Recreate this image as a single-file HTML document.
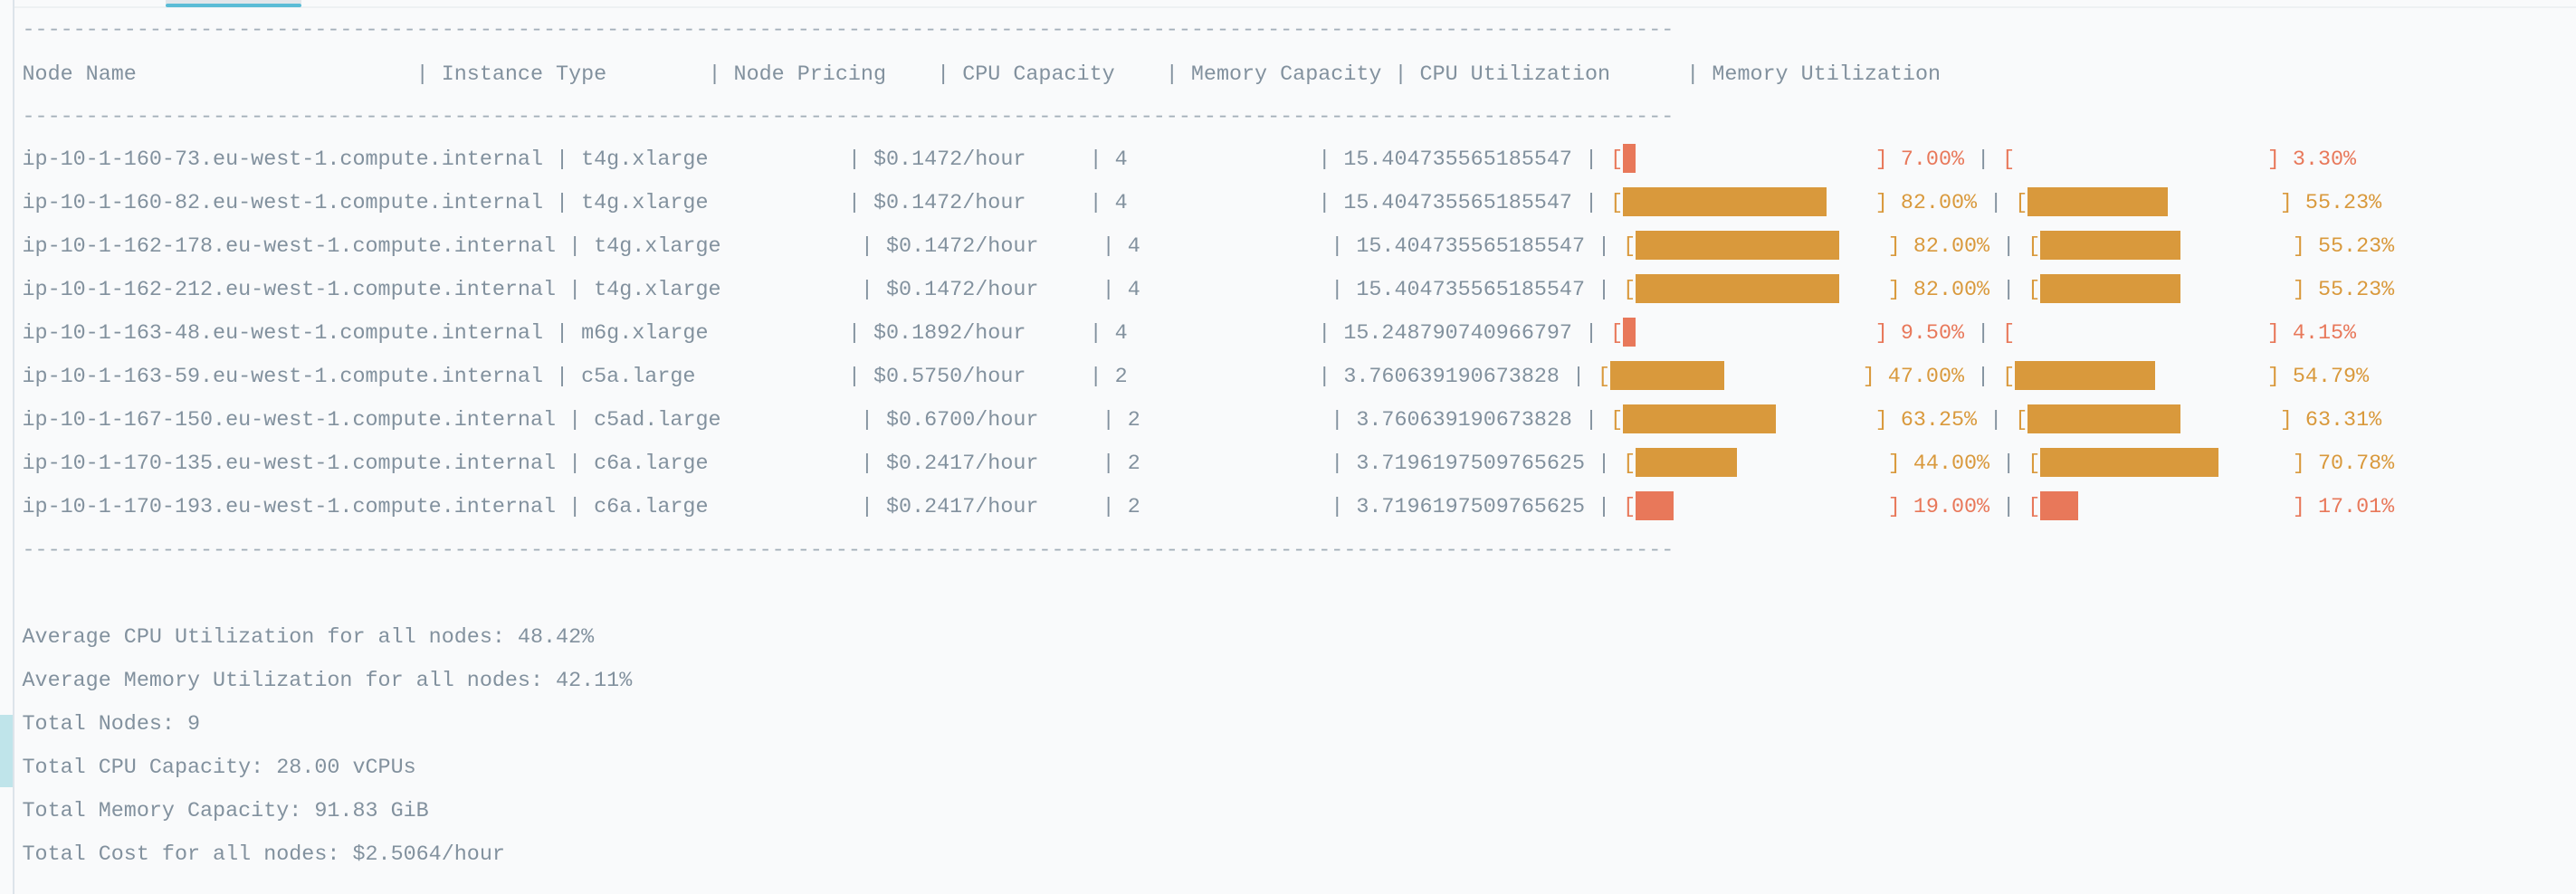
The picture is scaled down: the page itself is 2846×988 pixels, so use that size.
<!DOCTYPE html>
<html><head><meta charset="utf-8"><style>
html,body{margin:0;padding:0;background:#f9fafb;width:2846px;height:988px;overflow:hidden;position:relative}
.l{position:absolute;left:24.5px;font-family:"Liberation Mono",monospace;font-size:23.4px;line-height:48px;height:48px;white-space:pre;color:#82919e}
.d{color:#a3afb9}
.s{display:inline-block;width:19.85ch;height:32px;vertical-align:middle;position:relative;top:-1px}
.s b{display:block;height:32px}
.o{color:#d9993c}.r{color:#e8785a}
b.o{background:#d9993c}b.r{background:#e8785a}
</style></head><body>
<div style="position:absolute;left:14px;top:0;width:2px;height:988px;background:#dde4ea"></div>
<div style="position:absolute;left:16px;top:7px;width:2830px;height:2px;background:#eef1f3"></div>
<div style="position:absolute;left:183px;top:0;width:150px;height:4px;background:#e2e6ea"></div>
<div style="position:absolute;left:183px;top:4px;width:150px;height:4px;background:#5bbcd6;border-radius:2px"></div>
<div style="position:absolute;left:0;top:790px;width:14px;height:80px;background:#bfe4ea"></div>

<div class="l d" style="top:10px">----------------------------------------------------------------------------------------------------------------------------------</div>
<div class="l" style="top:59px">Node Name                      | Instance Type        | Node Pricing    | CPU Capacity    | Memory Capacity | CPU Utilization      | Memory Utilization</div>
<div class="l d" style="top:106px">----------------------------------------------------------------------------------------------------------------------------------</div>

<div class="l" style="top:153px">ip-10-1-160-73.eu-west-1.compute.internal | t4g.xlarge           | $0.1472/hour     | 4               | 15.404735565185547 | <span class="r">[<span class="s"><b class="r" style="width:1ch"></b></span>] 7.00%</span> | <span class="r">[<span class="s"></span>] 3.30%</span></div>
<div class="l" style="top:201px">ip-10-1-160-82.eu-west-1.compute.internal | t4g.xlarge           | $0.1472/hour     | 4               | 15.404735565185547 | <span class="o">[<span class="s"><b class="o" style="width:16ch"></b></span>] 82.00%</span> | <span class="o">[<span class="s"><b class="o" style="width:11ch"></b></span>] 55.23%</span></div>
<div class="l" style="top:249px">ip-10-1-162-178.eu-west-1.compute.internal | t4g.xlarge           | $0.1472/hour     | 4               | 15.404735565185547 | <span class="o">[<span class="s"><b class="o" style="width:16ch"></b></span>] 82.00%</span> | <span class="o">[<span class="s"><b class="o" style="width:11ch"></b></span>] 55.23%</span></div>
<div class="l" style="top:297px">ip-10-1-162-212.eu-west-1.compute.internal | t4g.xlarge           | $0.1472/hour     | 4               | 15.404735565185547 | <span class="o">[<span class="s"><b class="o" style="width:16ch"></b></span>] 82.00%</span> | <span class="o">[<span class="s"><b class="o" style="width:11ch"></b></span>] 55.23%</span></div>
<div class="l" style="top:345px">ip-10-1-163-48.eu-west-1.compute.internal | m6g.xlarge           | $0.1892/hour     | 4               | 15.248790740966797 | <span class="r">[<span class="s"><b class="r" style="width:1ch"></b></span>] 9.50%</span> | <span class="r">[<span class="s"></span>] 4.15%</span></div>
<div class="l" style="top:393px">ip-10-1-163-59.eu-west-1.compute.internal | c5a.large            | $0.5750/hour     | 2               | 3.760639190673828 | <span class="o">[<span class="s"><b class="o" style="width:9ch"></b></span>] 47.00%</span> | <span class="o">[<span class="s"><b class="o" style="width:11ch"></b></span>] 54.79%</span></div>
<div class="l" style="top:441px">ip-10-1-167-150.eu-west-1.compute.internal | c5ad.large           | $0.6700/hour     | 2               | 3.760639190673828 | <span class="o">[<span class="s"><b class="o" style="width:12ch"></b></span>] 63.25%</span> | <span class="o">[<span class="s"><b class="o" style="width:12ch"></b></span>] 63.31%</span></div>
<div class="l" style="top:489px">ip-10-1-170-135.eu-west-1.compute.internal | c6a.large            | $0.2417/hour     | 2               | 3.7196197509765625 | <span class="o">[<span class="s"><b class="o" style="width:8ch"></b></span>] 44.00%</span> | <span class="o">[<span class="s"><b class="o" style="width:14ch"></b></span>] 70.78%</span></div>
<div class="l" style="top:537px">ip-10-1-170-193.eu-west-1.compute.internal | c6a.large            | $0.2417/hour     | 2               | 3.7196197509765625 | <span class="r">[<span class="s"><b class="r" style="width:3ch"></b></span>] 19.00%</span> | <span class="r">[<span class="s"><b class="r" style="width:3ch"></b></span>] 17.01%</span></div>

<div class="l d" style="top:585px">----------------------------------------------------------------------------------------------------------------------------------</div>

<div class="l" style="top:681px">Average CPU Utilization for all nodes: 48.42%</div>
<div class="l" style="top:729px">Average Memory Utilization for all nodes: 42.11%</div>
<div class="l" style="top:777px">Total Nodes: 9</div>
<div class="l" style="top:825px">Total CPU Capacity: 28.00 vCPUs</div>
<div class="l" style="top:873px">Total Memory Capacity: 91.83 GiB</div>
<div class="l" style="top:921px">Total Cost for all nodes: $2.5064/hour</div>
</body></html>
